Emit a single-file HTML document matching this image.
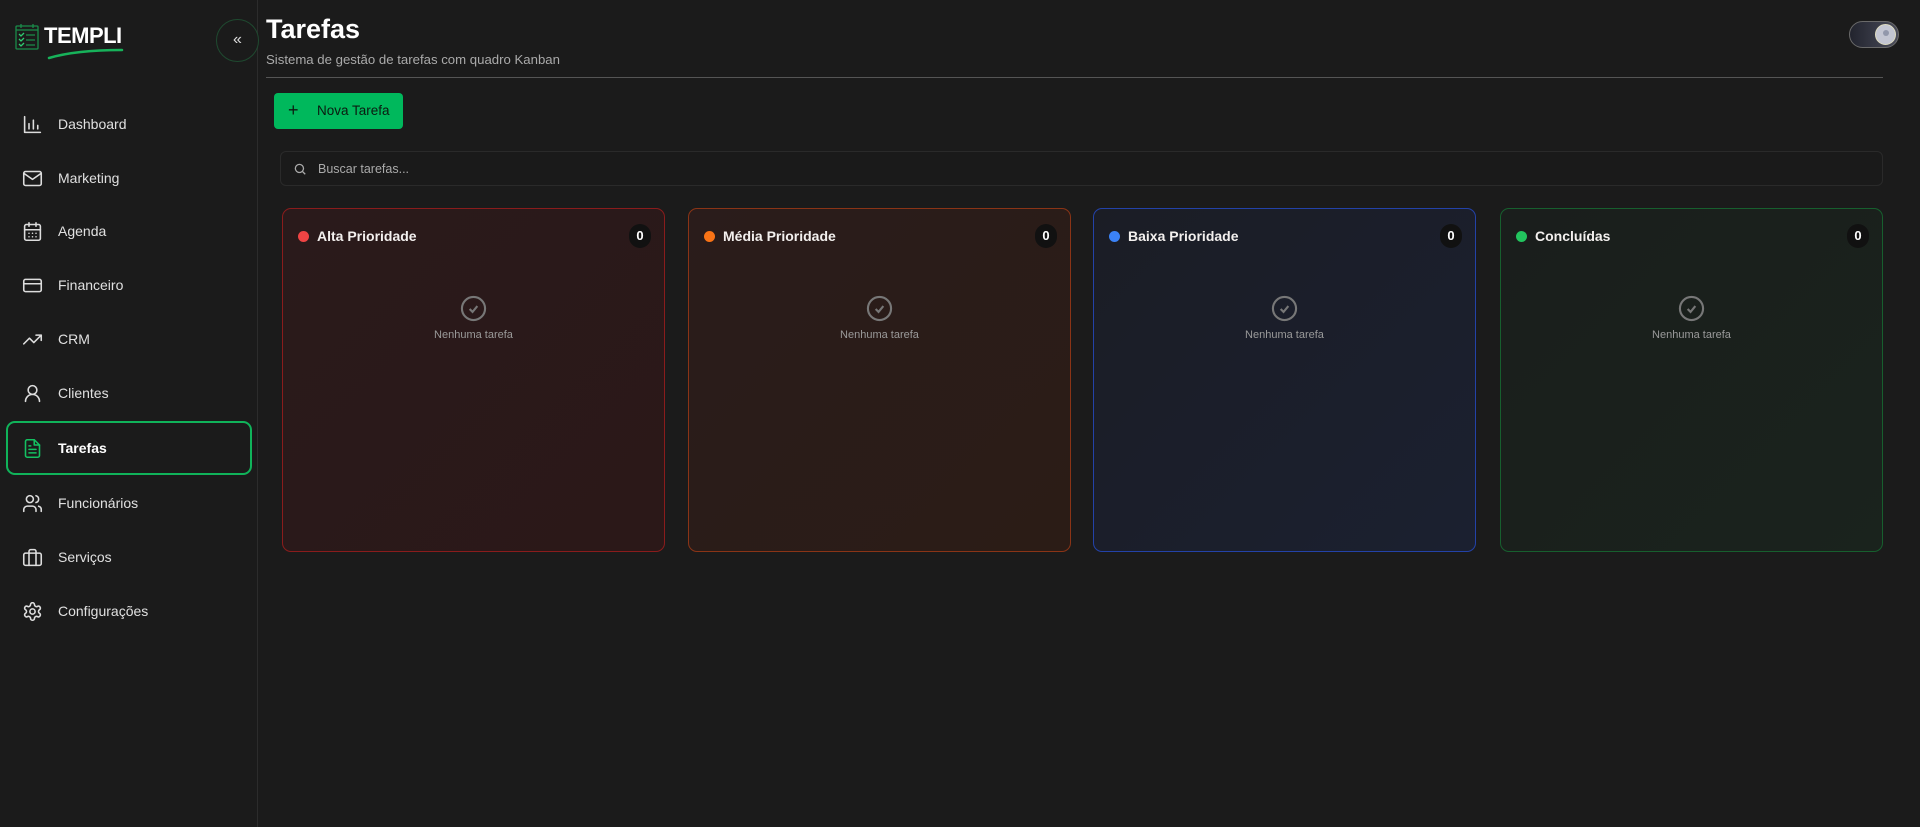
<!DOCTYPE html>
<html><head><meta charset="utf-8"><style>
*{box-sizing:border-box;margin:0;padding:0}
body{width:1920px;height:827px;background:#1b1b1b;font-family:"Liberation Sans",sans-serif;color:#e8e8e8;position:relative;overflow:hidden}
.side{position:absolute;left:0;top:0;width:258px;height:827px;border-right:1px solid #2c2c2c;background:#1b1b1b}
.nav{position:absolute;left:6px;width:246px;height:54px;display:flex;align-items:center;font-size:14px;color:#e0e0e0}
.nav svg{position:absolute;left:16px;width:21px;height:21px;fill:none;stroke:#ddd;stroke-width:1.8;stroke-linecap:round;stroke-linejoin:round}
.nav span{position:absolute;left:52px}
.nav.act{border:2.5px solid #10b35a;border-radius:9px}
.nav.act svg{stroke:#14c061;left:14px}
.nav.act span{font-weight:bold;color:#fff;left:50px}
.col{position:absolute;top:208px;width:383px;height:344px;border-radius:9px;border:1px solid}
.col .h{position:absolute;left:15px;top:19px;display:flex;align-items:center;font-weight:bold;font-size:14px;color:#f3f0ee}
.col .d{width:11px;height:11px;border-radius:50%;margin-right:8px}
.col .b{position:absolute;right:13px;top:15px;width:22px;height:24px;border-radius:11px;background:#111;color:#fff;font-weight:bold;font-size:13px;text-align:center;line-height:24px}
.col .e{position:absolute;left:0;right:0;top:86px;text-align:center;font-size:11px;color:#9a9a9a}
.col .e svg{display:block;margin:0 auto 7px;width:27px;height:27px}
</style></head><body>
<div class="side">
  <svg style="position:absolute;left:15px;top:23px" width="24" height="27" viewBox="0 0 24 27" fill="none" stroke="#1a8c4a" stroke-width="1.3"><rect x="1" y="3" width="22" height="23" rx="1"/><line x1="1" y1="7" x2="23" y2="7"/><line x1="6" y1="1" x2="6" y2="5"/><line x1="18" y1="1" x2="18" y2="5"/><path d="M4 11l2 2 3-3M4 16l2 2 3-3M4 21l2 2 3-3" stroke="#2ecc71"/><path d="M11 12h9M11 17h9M11 22h9"/></svg>
  <div style="position:absolute;left:44px;top:23px;font-weight:bold;font-size:22px;color:#fff;letter-spacing:-0.5px">TEMPLI</div>
  <svg style="position:absolute;left:46px;top:48px" width="80" height="14" viewBox="0 0 80 14"><path d="M3 10 Q30 2 76 2" stroke="#17b25a" stroke-width="2.5" fill="none" stroke-linecap="round"/></svg>
  <div style="position:absolute;left:216px;top:19px;width:43px;height:43px;border-radius:50%;border:1px solid #1f4a30;background:#1b1b1b;color:#ddd;font-size:16px;text-align:center;line-height:40px">«</div>

  <div class="nav" style="top:97px"><svg viewBox="0 0 24 24"><path d="M3 3v18h18M8 17v-6M13 17V7M18 17v-4"/></svg><span>Dashboard</span></div>
  <div class="nav" style="top:151px"><svg viewBox="0 0 24 24"><rect x="2" y="4" width="20" height="16" rx="2"/><path d="M2 6l10 7 10-7"/></svg><span>Marketing</span></div>
  <div class="nav" style="top:204px"><svg viewBox="0 0 24 24"><rect x="3" y="4" width="18" height="18" rx="2"/><path d="M16 2v4M8 2v4M3 10h18M8 14h.01M12 14h.01M16 14h.01M8 18h.01M12 18h.01M16 18h.01"/></svg><span>Agenda</span></div>
  <div class="nav" style="top:258px"><svg viewBox="0 0 24 24"><rect x="2" y="5" width="20" height="14" rx="2"/><path d="M2 10h20"/></svg><span>Financeiro</span></div>
  <div class="nav" style="top:312px"><svg viewBox="0 0 24 24"><path d="M22 7l-8.5 8.5-5-5L2 17M16 7h6v6"/></svg><span>CRM</span></div>
  <div class="nav" style="top:366px"><svg viewBox="0 0 24 24"><circle cx="12" cy="8" r="5"/><path d="M20 21a8 8 0 0 0-16 0"/></svg><span>Clientes</span></div>
  <div class="nav act" style="top:421px"><svg viewBox="0 0 24 24"><path d="M14 2H6a2 2 0 0 0-2 2v16a2 2 0 0 0 2 2h12a2 2 0 0 0 2-2V8z"/><path d="M14 2v6h6M8 13h8M8 17h8M8 9h2"/></svg><span>Tarefas</span></div>
  <div class="nav" style="top:476px"><svg viewBox="0 0 24 24"><path d="M16 21v-2a4 4 0 0 0-4-4H6a4 4 0 0 0-4 4v2"/><circle cx="9" cy="7" r="4"/><path d="M22 21v-2a4 4 0 0 0-3-3.87M16 3.13a4 4 0 0 1 0 7.75"/></svg><span>Funcionários</span></div>
  <div class="nav" style="top:530px"><svg viewBox="0 0 24 24"><rect x="2" y="7" width="20" height="14" rx="2"/><path d="M16 21V5a2 2 0 0 0-2-2h-4a2 2 0 0 0-2 2v16"/></svg><span>Serviços</span></div>
  <div class="nav" style="top:584px"><svg viewBox="0 0 24 24"><circle cx="12" cy="12" r="3"/><path d="M12.22 2h-.44a2 2 0 0 0-2 2v.18a2 2 0 0 1-1 1.73l-.43.25a2 2 0 0 1-2 0l-.15-.08a2 2 0 0 0-2.73.73l-.22.38a2 2 0 0 0 .73 2.73l.15.1a2 2 0 0 1 1 1.72v.51a2 2 0 0 1-1 1.74l-.15.09a2 2 0 0 0-.73 2.730l.22.38a2 2 0 0 0 2.73.73l.15-.08a2 2 0 0 1 2 0l.43.25a2 2 0 0 1 1 1.73V20a2 2 0 0 0 2 2h.44a2 2 0 0 0 2-2v-.18a2 2 0 0 1 1-1.73l.43-.25a2 2 0 0 1 2 0l.15.08a2 2 0 0 0 2.73-.73l.22-.39a2 2 0 0 0-.73-2.73l-.15-.08a2 2 0 0 1-1-1.74v-.5a2 2 0 0 1 1-1.74l.15-.09a2 2 0 0 0 .73-2.73l-.22-.38a2 2 0 0 0-2.73-.73l-.15.08a2 2 0 0 1-2 0l-.43-.25a2 2 0 0 1-1-1.73V4a2 2 0 0 0-2-2z"/></svg><span>Configurações</span></div>
</div>

<div style="position:absolute;left:266px;top:14px;font-size:27px;font-weight:bold;color:#fff">Tarefas</div>
<div style="position:absolute;left:266px;top:52px;font-size:13.2px;color:#aaa">Sistema de gestão de tarefas com quadro Kanban</div>
<div style="position:absolute;left:266px;top:77px;width:1617px;height:1px;background:#555"></div>

<div style="position:absolute;left:1849px;top:21px;width:50px;height:27px;border-radius:14px;background:linear-gradient(90deg,#22242e,#4a4c5a);border:1px solid #6a6a6a">
  <div style="position:absolute;right:2px;top:2px;width:21px;height:21px;border-radius:50%;background:#c3c6d2;border:1px solid #dedcc0"></div>
  <div style="position:absolute;right:9px;top:8px;width:6px;height:6px;border-radius:50%;background:#9298ab"></div>
</div>

<div style="position:absolute;left:274px;top:93px;width:129px;height:36px;border-radius:4px;background:#00b85c;color:#0b1a10;font-size:13.5px;line-height:36px">
  <span style="position:absolute;left:14px;font-size:18px;top:-1px">+</span><span style="position:absolute;left:43px">Nova Tarefa</span>
</div>

<div style="position:absolute;left:280px;top:151px;width:1603px;height:35px;border-radius:6px;border:1px solid #2a2a2a;background:#1a1a1a">
  <svg style="position:absolute;left:12px;top:10px" width="14" height="14" viewBox="0 0 24 24" fill="none" stroke="#aaa" stroke-width="2.2"><circle cx="11" cy="11" r="7"/><path d="M21 21l-4.5-4.5"/></svg>
  <span style="position:absolute;left:37px;top:10px;font-size:12.5px;color:#aaa">Buscar tarefas...</span>
</div>

<div class="col" style="left:282px;border-color:#8a1c1c;background:linear-gradient(135deg,#2a1a1b,#2b1818)"><div class="h"><span class="d" style="background:#ef4444"></span>Alta Prioridade</div><div class="b">0</div><div class="e"><svg viewBox="0 0 28 28" fill="none" stroke="#777" stroke-width="2.2"><circle cx="14" cy="14" r="12"/><path d="M10 14.5l3 3 5-6"/></svg>Nenhuma tarefa</div></div>
<div class="col" style="left:688px;border-color:#8a3416;background:linear-gradient(135deg,#2a1c1b,#2b1c16)"><div class="h"><span class="d" style="background:#f97316"></span>Média Prioridade</div><div class="b">0</div><div class="e"><svg viewBox="0 0 28 28" fill="none" stroke="#777" stroke-width="2.2"><circle cx="14" cy="14" r="12"/><path d="M10 14.5l3 3 5-6"/></svg>Nenhuma tarefa</div></div>
<div class="col" style="left:1093px;border-color:#2342a8;background:linear-gradient(135deg,#1b1d25,#1b2030)"><div class="h"><span class="d" style="background:#3b82f6"></span>Baixa Prioridade</div><div class="b">0</div><div class="e"><svg viewBox="0 0 28 28" fill="none" stroke="#777" stroke-width="2.2"><circle cx="14" cy="14" r="12"/><path d="M10 14.5l3 3 5-6"/></svg>Nenhuma tarefa</div></div>
<div class="col" style="left:1500px;border-color:#175f2e;background:linear-gradient(135deg,#1a1e1c,#1a231d)"><div class="h"><span class="d" style="background:#22c55e"></span>Concluídas</div><div class="b">0</div><div class="e"><svg viewBox="0 0 28 28" fill="none" stroke="#777" stroke-width="2.2"><circle cx="14" cy="14" r="12"/><path d="M10 14.5l3 3 5-6"/></svg>Nenhuma tarefa</div></div>
</body></html>
